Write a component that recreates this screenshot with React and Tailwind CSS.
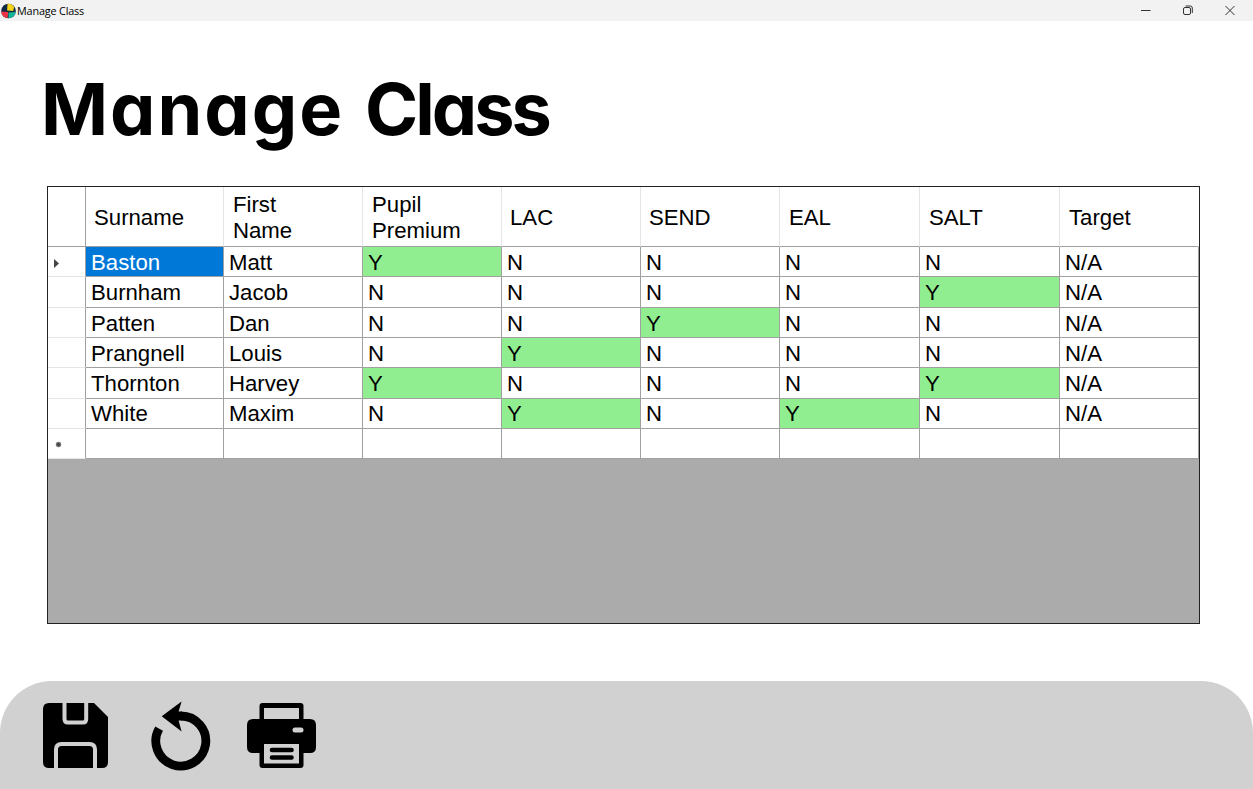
import React from "react";

const COLUMNS = ["Surname", "First Name", "Pupil Premium", "LAC", "SEND", "EAL", "SALT", "Target"];

const PUPILS = [
  ["Baston", "Matt", "Y", "N", "N", "N", "N", "N/A"],
  ["Burnham", "Jacob", "N", "N", "N", "N", "Y", "N/A"],
  ["Patten", "Dan", "N", "N", "Y", "N", "N", "N/A"],
  ["Prangnell", "Louis", "N", "Y", "N", "N", "N", "N/A"],
  ["Thornton", "Harvey", "Y", "N", "N", "N", "Y", "N/A"],
  ["White", "Maxim", "N", "Y", "N", "Y", "N", "N/A"],
  ["", "", "", "", "", "", "", ""],
];

const GRID = "grid grid-cols-[38px_138px_139px_139px_139px_139px_140px_140px_139px]";
const HEIGHTS = ["h-[30px]", "h-[31px]", "h-[30px]", "h-[30px]", "h-[31px]", "h-[30px]", "h-[30px]"];
const TOP_PADDING = ["pt-[3px]", "pt-[2px]", "pt-[3px]", "pt-[3px]", "pt-[2px]", "pt-[2px]", "pt-[2px]"];

function TitleBar() {
  return (
    <header className="flex h-[21px] shrink-0 items-center bg-[#f2f2f2]">
      <svg className="ml-px h-[16px] w-[15px]" viewBox="0 0 16 16">
        <circle cx="8" cy="8" r="7.8" fill="#102a43" />
        <path d="M7 0.3A7.8 7.8 0 0 1 14 3.8L13 8 6.5 7.5Z" fill="#f4d51c" />
        <path d="M0.3 8.5L7.8 9 7 15.7A7.8 7.8 0 0 1 0.3 8.5Z" fill="#ee3344" />
        <path d="M8 9.5L15.6 9A7.8 7.8 0 0 1 8 15.8Z" fill="#16b89b" />
      </svg>
      <span className="ml-[1px] mt-[2px] font-['Open_Sans','Noto_Sans',sans-serif] text-[10.8px] leading-none tracking-[-0.15px] text-black">
        Manage Class
      </span>
      <div className="ml-auto mr-[18px] flex items-center gap-[32px] text-[#333]">
        <svg className="h-[11px] w-[10px]" viewBox="0 0 10 11" fill="none" stroke="currentColor">
          <path d="M0 5.5H9.5" />
        </svg>
        <svg className="h-[11px] w-[10px]" viewBox="0 0 10 11" fill="none" stroke="currentColor">
          <rect x="0.5" y="2.5" width="7" height="7" rx="1.5" />
          <path d="M2.5 1H7.5Q9.3 1 9.3 3V8" />
        </svg>
        <svg className="h-[11px] w-[10px]" viewBox="0 0 10 11" fill="none" stroke="currentColor">
          <path d="M0.5 1L9.5 10M9.5 1L0.5 10" />
        </svg>
      </div>
    </header>
  );
}

function cellColour(value, selected) {
  if (selected) return "bg-[#0078d7] text-white";
  if (value === "Y") return "bg-[#90ee90]";
  return "bg-white";
}

function PupilTable() {
  return (
    <section className="ml-[47px] mt-[36px] h-[438px] w-[1153px] shrink-0 border border-[#222] bg-[#ababab] font-['Liberation_Sans',Arial,sans-serif] text-[22.2px] text-black">
      <div className={`${GRID} h-[60px] bg-white`}>
        <div className="border-b border-r border-[#a0a0a0]" />
        {COLUMNS.map((name) => (
          <div
            key={name}
            className="flex items-center border-b border-r border-b-[#a0a0a0] border-r-[#e5e5e5] pl-[9px] pr-[30px] pt-[2px] leading-[26px] last:border-r-white nth-2:pl-[8px] nth-5:pl-[8px] nth-6:pl-[8px]"
          >
            {name}
          </div>
        ))}
      </div>
      {PUPILS.map((row, r) => (
        <div key={r} className={`${GRID} ${HEIGHTS[r]}`}>
          <div className="flex items-center border-b border-r border-b-[#e5e5e5] border-r-[#a0a0a0] bg-white">
            {r === 0 && (
              <svg className="ml-[6px] mt-[3px] h-[9px] w-[5px]" viewBox="0 0 5 9">
                <path d="M0 0L5 4.5L0 9Z" fill="#444" />
              </svg>
            )}
            {r === 6 && (
              <svg className="ml-[7px] mt-[2px] h-[7px] w-[7px]" viewBox="0 0 7 7">
                <circle cx="3.5" cy="3.5" r="2.7" fill="#777" />
                <circle cx="3.5" cy="3.5" r="1.6" fill="#444" />
              </svg>
            )}
          </div>
          {row.map((value, c) => (
            <div
              key={c}
              className={`flex items-center border-b border-r border-[#a0a0a0] pl-[5px] leading-none ${TOP_PADDING[r]} ${cellColour(value, r === 0 && c === 0)}`}
            >
              {value}
            </div>
          ))}
        </div>
      ))}
    </section>
  );
}

function Toolbar() {
  return (
    <footer className="mt-auto flex h-[108px] shrink-0 items-start rounded-t-[52px] bg-[#d1d1d1] pl-[43px]">
      <button aria-label="Save" className="mt-[22px]">
        <svg className="h-[65px] w-[65px]" viewBox="0 0 65 65">
          <path d="M6 0H51L65 14V59Q65 65 59 65H6Q0 65 0 59V6Q0 0 6 0Z" />
          <path d="M21.5 0V16Q21.5 19.5 25 19.5H40Q43.2 19.5 43.2 16V0" fill="none" stroke="#d1d1d1" strokeWidth="4" />
          <path d="M13 65V46.5Q13 41 18.5 41H46.5Q52 41 52 46.5V65" fill="none" stroke="#d1d1d1" strokeWidth="4" />
        </svg>
      </button>
      <button aria-label="Undo" className="ml-[43px] mt-[20px]">
        <svg className="h-[70px] w-[60px]" viewBox="0 0 60 70">
          <path d="M8.1 27.6A25 25 0 1 0 29.8 15" fill="none" stroke="#000" strokeWidth="8.8" />
          <path d="M10.7 15.2L30.6 0.6L27.6 10.6H31V19.4H27.6L30.6 30.6Z" />
        </svg>
      </button>
      <button aria-label="Print" className="ml-[36px] mt-[22px]">
        <svg className="h-[65px] w-[69px]" viewBox="0 0 69 65">
          <path
            fillRule="evenodd"
            d="M15.5 0H53.5Q56.5 0 56.5 3V16H63Q69 16 69 22V44Q69 50 63 50H56.5V62Q56.5 65 53.5 65H15.5Q12.5 65 12.5 62V50H6Q0 50 0 44V22Q0 16 6 16H12.5V3Q12.5 0 15.5 0ZM17 5V16H52V5ZM17 41V60.5H52V41ZM48 24.5A2.5 2.5 0 0 0 48 29.5H54A2.5 2.5 0 0 0 54 24.5Z"
          />
          <path d="M25 47H44.5M25 54.5H44.5" stroke="#000" strokeWidth="4.6" strokeLinecap="round" />
        </svg>
      </button>
    </footer>
  );
}

export default function App() {
  return (
    <main className="flex h-[789px] w-[1253px] flex-col overflow-hidden bg-white">
      <TitleBar />
      <h1 className="ml-[41px] mt-[46px] flex h-[83px] shrink-0 gap-[21px] whitespace-nowrap font-['Inter',sans-serif] text-[72px] font-bold leading-[83px] text-black [font-feature-settings:'cv11']">
        <span className="tracking-[2px]">Manage</span>
        <span className="tracking-[-3px]">Class</span>
      </h1>
      <PupilTable />
      <Toolbar />
    </main>
  );
}
